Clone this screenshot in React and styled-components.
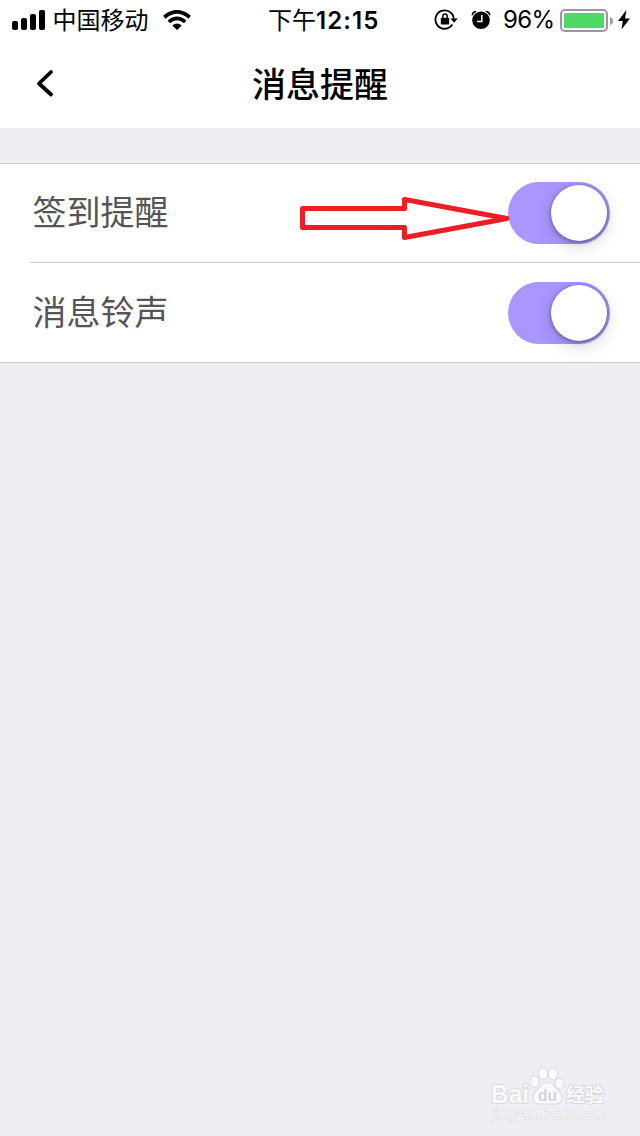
import React from "react";
import styled, { createGlobalStyle } from "styled-components";

const GlobalStyle = createGlobalStyle`
  * {
    box-sizing: border-box;
  }

  body {
    margin: 0;
    background: #efeef4;
    font-family: Inter, "Noto Sans CJK SC", sans-serif;
  }
`;

const Screen = styled.div`
  display: flex;
  flex-direction: column;
  width: 640px;
  height: 1136px;
  overflow: hidden;
  background: #efeef4;
`;

const StatusBar = styled.div`
  display: grid;
  grid-template: 40px / 268px 1fr 206px;
  align-items: center;
  height: 40px;
  background: white;
  color: black;
`;

const StatusGroup = styled.div`
  display: flex;
  align-items: center;
  height: 40px;
  padding-left: ${props => props.$inset || 0}px;

  svg {
    display: block;
    flex: none;
  }
`;

const Carrier = styled.span`
  width: 97px;
  margin: 0 13.5px 0 6.5px;
  font: 400 24px/38px "Noto Sans CJK SC", sans-serif;
  padding-bottom: 2px;
  white-space: nowrap;
`;

const Time = styled.div`
  font: 400 24px/38px "Noto Sans CJK SC", sans-serif;
  white-space: nowrap;
  padding-bottom: 2px;

  b {
    font: 600 24px/36px Inter, sans-serif;
    letter-spacing: 1.1px;
  }
`;

const Percent = styled.span`
  width: 50px;
  margin: 0 7px 0 12px;
  font: 400 24px/40px Inter, sans-serif;
  letter-spacing: -0.6px;
  white-space: nowrap;
`;

const Spacer = styled.span`
  width: ${props => props.$size}px;
`;

const NavBar = styled.header`
  display: grid;
  grid-template-columns: 90px 1fr 90px;
  align-items: center;
  height: 88px;
  background: white;

  svg {
    display: block;
    margin: 0 0 2px 34px;
  }
`;

const Title = styled.h1`
  margin: 0;
  font: 500 34px/86px "Noto Sans CJK SC", sans-serif;
  padding-bottom: 2px;
  text-align: center;
`;

const Settings = styled.main`
  margin-top: 35px;
  padding-left: 30px;
  background: white;
  border-top: 1px solid #c8c7cc;
  border-bottom: 1px solid #c8c7cc;
`;

const Row = styled.div`
  position: relative;
  display: flex;
  align-items: center;
  justify-content: space-between;
  height: 98px;
  padding: 0 30px 0 2.5px;

  & + & {
    border-top: 1px solid #c8c7cc;
    height: 100px;
  }
`;

const Label = styled.span`
  padding-bottom: 4px;
  font: 400 34px/94px "Noto Sans CJK SC", sans-serif;
  color: #555;
`;

const Toggle = styled.span`
  display: flex;
  justify-content: flex-end;
  width: 102px;
  height: 62px;
  padding: 3px;
  border-radius: 31px;
  background: #ab95ff;
`;

const Knob = styled.span`
  width: 56px;
  height: 56px;
  border-radius: 50%;
  background: white;
  box-shadow: 0 1px 4px rgba(0, 0, 0, 0.42), 0 5px 18px rgba(0, 0, 0, 0.16);
`;

const Arrow = styled.svg`
  position: absolute;
  left: 266px;
  top: 30px;
`;

const Watermark = styled.svg`
  display: block;
  margin: auto 26px 10px auto;
  font-family: "Liberation Sans", sans-serif;
`;

const SignalIcon = () => (
  <svg width="34" height="20" viewBox="0 0 34 20">
    <rect x="0" y="11" width="6" height="9" rx="2" />
    <rect x="9" y="8" width="6" height="12" rx="2" />
    <rect x="18" y="4" width="6" height="16" rx="2" />
    <rect x="27" y="0" width="6" height="20" rx="2" />
  </svg>
);

const WifiIcon = () => (
  <svg width="28" height="20" viewBox="0 0 28 20" fill="none" stroke="#000">
    <path d="M1.3 7.2Q14-3.5 26.7 7.2" strokeWidth="3.8" />
    <path d="M5.8 11.8Q14 4.8 22.2 11.8" strokeWidth="3.6" />
    <path d="M14 20L9.3 15.4Q14 11.8 18.7 15.4Z" fill="#000" stroke="none" />
  </svg>
);

const RotationLockIcon = () => (
  <svg width="24" height="22" viewBox="0 0 24 22">
    <path
      d="M18.3 15.6A9.2 9.2 0 1 1 19.8 10"
      fill="none"
      stroke="#000"
      strokeWidth="1.8"
    />
    <path d="M16.4 9.4h7.4l-3.7 4.4z" />
    <rect x="6.8" y="8.8" width="8.4" height="6.8" rx="0.8" />
    <path
      d="M8.8 9.3V7.2a2.2 2.2 0 0 1 4.4 0v2.1"
      fill="none"
      stroke="#000"
      strokeWidth="1.4"
    />
  </svg>
);

const AlarmIcon = () => (
  <svg width="20" height="20" viewBox="0 0 20 20">
    <circle cx="10" cy="10.3" r="8.8" />
    <path d="M0.5 5.2Q0.8 1 5 0.7L5.4 1.7Q2.6 3 1.5 5.5z" />
    <path d="M19.5 5.2Q19.2 1 15 0.7L14.6 1.7Q17.4 3 18.5 5.5z" />
    <path d="M10.8 5v6.5H6" fill="none" stroke="#fff" strokeWidth="1.5" />
  </svg>
);

const BatteryIcon = () => (
  <svg width="54" height="24" viewBox="0 0 54 24">
    <rect
      x="1"
      y="2"
      width="46"
      height="21"
      rx="4"
      fill="#fff"
      stroke="#999"
      strokeWidth="2"
    />
    <rect x="4" y="5" width="40" height="15" rx="1" fill="#4cd964" />
    <path d="M50 9q3 1 3 4t-3 4z" fill="#999" />
  </svg>
);

const BoltIcon = () => (
  <svg width="12" height="20" viewBox="0 0 12 20">
    <path d="M8.4 0L0 11h4.8L3.5 19.5 12 8.4H7z" />
  </svg>
);

const SwitchRow = ({ label, children }) => (
  <Row>
    <Label>{label}</Label>
    {children}
    <Toggle role="switch" aria-checked="true">
      <Knob />
    </Toggle>
  </Row>
);

export default function App() {
  return (
    <Screen>
      <GlobalStyle />
      <StatusBar>
        <StatusGroup $inset={12}>
          <SignalIcon />
          <Carrier>中国移动</Carrier>
          <WifiIcon />
        </StatusGroup>
        <Time>
          下午<b>12:15</b>
        </Time>
        <StatusGroup>
          <RotationLockIcon />
          <Spacer $size={13} />
          <AlarmIcon />
          <Percent>96%</Percent>
          <BatteryIcon />
          <Spacer $size={4} />
          <BoltIcon />
        </StatusGroup>
      </StatusBar>

      <NavBar>
        <svg width="22" height="30" viewBox="0 0 22 30">
          <path
            d="M17 4L5 15.5l12 11"
            fill="none"
            stroke="#000"
            strokeWidth="3.8"
            strokeLinecap="round"
            strokeLinejoin="round"
          />
        </svg>
        <Title>消息提醒</Title>
      </NavBar>

      <Settings>
        <SwitchRow label="签到提醒">
          <Arrow width="216" height="48" viewBox="0 0 216 48">
            <path
              d="M6.5 14.5h102v-9L211 24.5 108.5 43.5V33.5H6.5z"
              fill="none"
              stroke="#ee1c24"
              strokeWidth="5"
              strokeLinejoin="round"
            />
          </Arrow>
        </SwitchRow>
        <SwitchRow label="消息铃声" />
      </Settings>

      <Watermark width="124" height="62" viewBox="0 0 124 62">
        <g
          fill="#fafafc"
          stroke="#d8d8dd"
          strokeWidth="1.8"
          strokeLinejoin="round"
          paintOrder="stroke"
        >
          <text
            x="1"
            y="38.5"
            fontSize="25"
            fontWeight="700"
            textLength="38"
            lengthAdjust="spacingAndGlyphs"
          >
            Bai
          </text>
          <ellipse cx="44.5" cy="17.5" rx="4" ry="5.5" />
          <ellipse cx="53" cy="9.5" rx="4.2" ry="5.7" />
          <ellipse cx="63" cy="10" rx="4.2" ry="5.5" />
          <ellipse cx="69.5" cy="19.5" rx="4" ry="5" />
          <path d="M57 19c-5 0-7 5-11 9s-4 11.5 4 11.5h15c8 0 8-7.5 4-11.5s-7-9-12-9z" />
          <text
            x="76"
            y="37.5"
            fontSize="19"
            fontWeight="700"
            textLength="38"
            fontFamily="Noto Sans CJK SC, sans-serif"
          >
            经验
          </text>
          <text
            x="2"
            y="54.5"
            fontSize="12"
            textLength="114"
            strokeWidth="1"
            fontFamily="DejaVu Sans, sans-serif"
          >
            jingyan.baidu.com
          </text>
        </g>
        <text
          x="48"
          y="37"
          fontSize="17"
          fontWeight="700"
          textLength="19"
          lengthAdjust="spacingAndGlyphs"
          fill="#d4d4da"
        >
          du
        </text>
      </Watermark>
    </Screen>
  );
}
